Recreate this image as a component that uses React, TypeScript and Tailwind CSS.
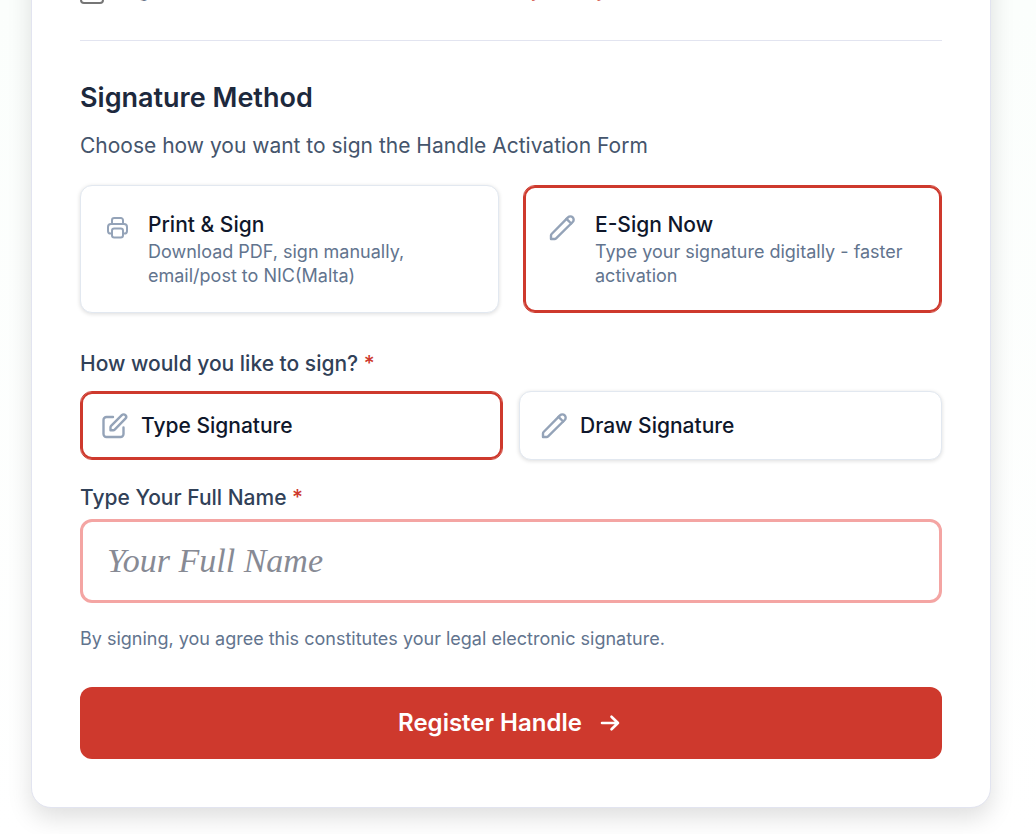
import { useState } from "react";
import type { ReactNode } from "react";

function PrinterIcon() {
  return (
    <svg viewBox="0 0 24 24" className="mt-1.5 size-6 shrink-0" fill="none" stroke="currentColor" strokeWidth="2" strokeLinecap="round" strokeLinejoin="round" aria-hidden="true">
      <path d="M7 8V4.200a2.200 2.200 0 0 1 2.200-2.200h6.600a2.200 2.200 0 0 1 2.200 2.200V8" />
      <path d="M7 17.500H5.600A2.600 2.600 0 0 1 3 14.900V11a3 3 0 0 1 3-3h13a3 3 0 0 1 3 3v3.900a2.600 2.600 0 0 1-2.600 2.600H18" />
      <rect x="7" y="12.500" width="11" height="9" rx="2.200" />
    </svg>
  );
}

function PencilIcon({ className }: { className: string }) {
  return (
    <svg viewBox="0 0 28 28" className={className} fill="none" stroke="currentColor" strokeWidth="2.4" strokeLinecap="round" strokeLinejoin="round" aria-hidden="true">
      <path d="M3 25v-3.600a2 2 0 0 1 .600-1.400L20 3.300a3.300 3.300 0 0 1 4.700 4.700L8.100 24.400a2 2 0 0 1-1.400.600Z" />
      <path d="m18.500 4.800 4.700 4.700" />
    </svg>
  );
}

function EditIcon() {
  return (
    <svg viewBox="0 0 28 28" className="size-7 shrink-0" fill="none" stroke="currentColor" strokeWidth="2.4" strokeLinecap="round" strokeLinejoin="round" aria-hidden="true">
      <path d="M12 5H5.500A3 3 0 0 0 2.500 8v14a3 3 0 0 0 3 3H19.500a3 3 0 0 0 3-3v-6.500" />
      <path d="M9.500 18.200v-3a2 2 0 0 1 .600-1.400L20.800 3.100a2.500 2.500 0 0 1 3.600 3.600L13.700 17.600a2 2 0 0 1-1.400.600Z" />
    </svg>
  );
}

function Choice({ name, checked, onChange, className, children }: {
  name: string;
  checked: boolean;
  onChange: () => void;
  className: string;
  children: ReactNode;
}) {
  const state = checked
    ? "border-[#ce392d] ring-2 ring-inset ring-[#ce392d]"
    : "border-slate-200 shadow-[0_1px_4px_rgba(0,0,0,0.14)]";
  return (
    <label className={`relative flex cursor-pointer rounded-xl border bg-white text-[#94a3b8] ${state} ${className}`}>
      <input type="radio" name={name} checked={checked} onChange={onChange} className="sr-only" />
      {children}
    </label>
  );
}

export default function App() {
  const [method, setMethod] = useState("esign");
  const [style, setStyle] = useState("type");

  return (
    <main className="overflow-hidden bg-linear-to-b from-[#fbfefc] to-white pb-7 pl-[31px] pr-[45px] font-['Inter',sans-serif]">
      <form
        onSubmit={(e) => e.preventDefault()}
        className="-mt-[75px] rounded-[20px] border border-[#e2e4f0] bg-white p-12 shadow-[0_10px_24px_rgba(0,0,0,0.13)]"
      >
        <div className="flex items-end gap-2.5 border-b border-[#e2e4f0] pb-9 text-[21px] leading-[30px] text-slate-600">
          <input id="agree" type="checkbox" className="size-6 shrink-0 appearance-none rounded border-2 border-[#767676] bg-white" />
          <label htmlFor="agree">
            I agree to the Terms of Service and{" "}
            <a href="#privacy" className="text-[#ce392d]">Privacy Policy</a>
          </label>
        </div>

        <h2 className="mt-[39px] text-[27px] font-semibold leading-9 text-slate-800">Signature Method</h2>
        <p className="mt-3.5 text-[21px] leading-8 text-slate-600">Choose how you want to sign the Handle Activation Form</p>

        <div className="mt-[23px] grid grid-cols-2 gap-6">
          <Choice name="method" checked={method === "print"} onChange={() => setMethod("print")} className="gap-[19px] p-6">
            <PrinterIcon />
            <span>
              <span className="block text-[21px] font-medium leading-[30px] text-slate-900">Print &amp; Sign</span>
              <span className="block text-lg leading-6 text-slate-500">Download PDF, sign manually, email/post to NIC(Malta)</span>
            </span>
          </Choice>
          <Choice name="method" checked={method === "esign"} onChange={() => setMethod("esign")} className="gap-[19px] p-6">
            <PencilIcon className="mt-1 size-7 shrink-0" />
            <span>
              <span className="block text-[21px] font-medium leading-[30px] text-slate-900">E-Sign Now</span>
              <span className="block text-lg leading-6 text-slate-500">Type your signature digitally - faster activation</span>
            </span>
          </Choice>
        </div>

        <fieldset className="mt-9">
          <legend className="text-[21px] font-medium leading-[30px] text-slate-700">
            How would you like to sign? <span className="text-[#ce392d]">*</span>
          </legend>
          <div className="mt-3 grid grid-cols-2 gap-4">
            <Choice name="style" checked={style === "type"} onChange={() => setStyle("type")} className="items-center gap-3 px-5 py-[18px]">
              <EditIcon />
              <span className="text-[21px] font-medium leading-[31px] text-slate-900">Type Signature</span>
            </Choice>
            <Choice name="style" checked={style === "draw"} onChange={() => setStyle("draw")} className="items-center gap-3 px-5 py-[18px]">
              <PencilIcon className="size-7 shrink-0" />
              <span className="text-[21px] font-medium leading-[31px] text-slate-900">Draw Signature</span>
            </Choice>
          </div>
        </fieldset>

        <label htmlFor="full-name" className="mt-[23px] block text-[21px] font-medium leading-[30px] text-slate-700">
          Type Your Full Name <span className="text-[#ce392d]">*</span>
        </label>
        <input
          id="full-name"
          type="text"
          placeholder="Your Full Name"
          className="mt-1.5 block h-21 w-full rounded-xl border-3 border-[#f4a5a3] bg-white px-6 font-['Liberation_Serif',serif] text-[34px] italic text-slate-900 outline-none placeholder:text-[#878a94]"
        />
        <p className="mt-6 text-lg leading-6 text-slate-500">By signing, you agree this constitutes your legal electronic signature.</p>

        <button type="submit" className="mt-9 flex h-18 w-full items-center justify-center gap-[18px] rounded-xl bg-[#ce392d] pr-1 text-2xl font-semibold text-white">
          Register Handle
          <svg viewBox="0 0 20 20" className="size-5" fill="none" stroke="currentColor" strokeWidth="2.6" strokeLinecap="round" strokeLinejoin="round" aria-hidden="true">
            <path d="M2 10h16M11.500 3.700 18 10l-6.500 6.300" />
          </svg>
        </button>
      </form>
    </main>
  );
}
